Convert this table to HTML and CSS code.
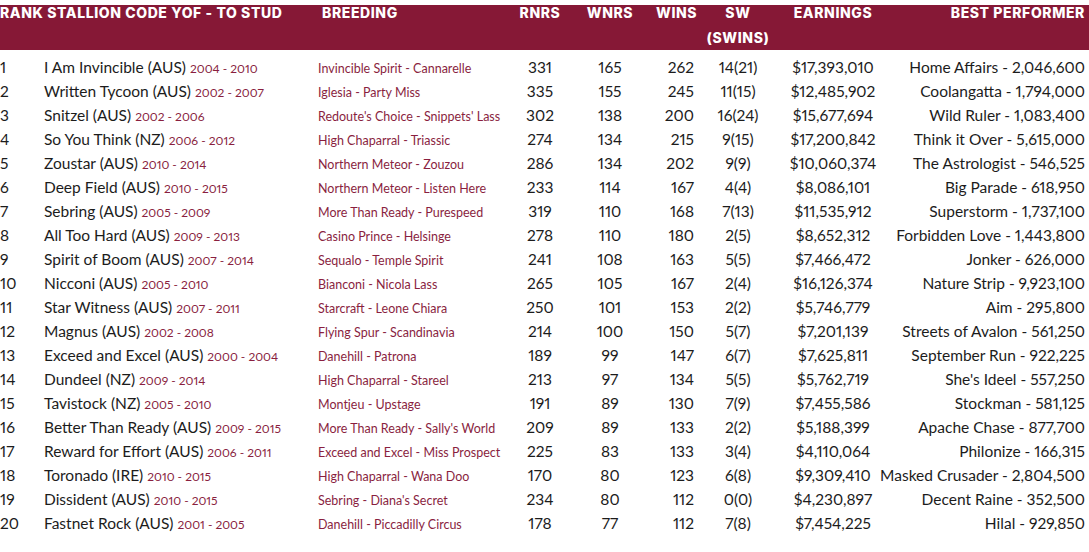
FILE: index.html
```html
<!DOCTYPE html>
<html lang="en">
<head>
<meta charset="utf-8">
<title>Stallion Rankings</title>
<link rel="stylesheet" href="styles.css">
</head>
<body>
<div class="sheet">
  <div class="head">
    <div class="h-rank">RANK STALLION CODE YOF - TO STUD</div>
    <div class="h-breed">BREEDING</div>
    <div class="h-num c-rnrs">RNRS</div>
    <div class="h-num c-wnrs">WNRS</div>
    <div class="h-num c-wins">WINS</div>
    <div class="h-num c-sw">SW<br>(SWINS)</div>
    <div class="h-num c-earn">EARNINGS</div>
    <div class="h-num c-best">BEST PERFORMER</div>
  </div>
  <div class="rows">
    <div class="row"><div class="rank">1</div><div class="name">I Am Invincible (AUS) <span class="yrs">2004 - 2010</span></div><div class="breed">Invincible Spirit - Cannarelle</div><div class="c-rnrs">331</div><div class="c-wnrs">165</div><div class="c-wins">262</div><div class="c-sw">14(21)</div><div class="c-earn">$17,393,010</div><div class="c-best">Home Affairs - 2,046,600</div></div>
    <div class="row"><div class="rank">2</div><div class="name">Written Tycoon (AUS) <span class="yrs">2002 - 2007</span></div><div class="breed">Iglesia - Party Miss</div><div class="c-rnrs">335</div><div class="c-wnrs">155</div><div class="c-wins">245</div><div class="c-sw">11(15)</div><div class="c-earn">$12,485,902</div><div class="c-best">Coolangatta - 1,794,000</div></div>
    <div class="row"><div class="rank">3</div><div class="name">Snitzel (AUS) <span class="yrs">2002 - 2006</span></div><div class="breed">Redoute's Choice - Snippets' Lass</div><div class="c-rnrs">302</div><div class="c-wnrs">138</div><div class="c-wins">200</div><div class="c-sw">16(24)</div><div class="c-earn">$15,677,694</div><div class="c-best">Wild Ruler - 1,083,400</div></div>
    <div class="row"><div class="rank">4</div><div class="name">So You Think (NZ) <span class="yrs">2006 - 2012</span></div><div class="breed">High Chaparral - Triassic</div><div class="c-rnrs">274</div><div class="c-wnrs">134</div><div class="c-wins">215</div><div class="c-sw">9(15)</div><div class="c-earn">$17,200,842</div><div class="c-best">Think it Over - 5,615,000</div></div>
    <div class="row"><div class="rank">5</div><div class="name">Zoustar (AUS) <span class="yrs">2010 - 2014</span></div><div class="breed">Northern Meteor - Zouzou</div><div class="c-rnrs">286</div><div class="c-wnrs">134</div><div class="c-wins">202</div><div class="c-sw">9(9)</div><div class="c-earn">$10,060,374</div><div class="c-best">The Astrologist - 546,525</div></div>
    <div class="row"><div class="rank">6</div><div class="name">Deep Field (AUS) <span class="yrs">2010 - 2015</span></div><div class="breed">Northern Meteor - Listen Here</div><div class="c-rnrs">233</div><div class="c-wnrs">114</div><div class="c-wins">167</div><div class="c-sw">4(4)</div><div class="c-earn">$8,086,101</div><div class="c-best">Big Parade - 618,950</div></div>
    <div class="row"><div class="rank">7</div><div class="name">Sebring (AUS) <span class="yrs">2005 - 2009</span></div><div class="breed">More Than Ready - Purespeed</div><div class="c-rnrs">319</div><div class="c-wnrs">110</div><div class="c-wins">168</div><div class="c-sw">7(13)</div><div class="c-earn">$11,535,912</div><div class="c-best">Superstorm - 1,737,100</div></div>
    <div class="row"><div class="rank">8</div><div class="name">All Too Hard (AUS) <span class="yrs">2009 - 2013</span></div><div class="breed">Casino Prince - Helsinge</div><div class="c-rnrs">278</div><div class="c-wnrs">110</div><div class="c-wins">180</div><div class="c-sw">2(5)</div><div class="c-earn">$8,652,312</div><div class="c-best">Forbidden Love - 1,443,800</div></div>
    <div class="row"><div class="rank">9</div><div class="name">Spirit of Boom (AUS) <span class="yrs">2007 - 2014</span></div><div class="breed">Sequalo - Temple Spirit</div><div class="c-rnrs">241</div><div class="c-wnrs">108</div><div class="c-wins">163</div><div class="c-sw">5(5)</div><div class="c-earn">$7,466,472</div><div class="c-best">Jonker - 626,000</div></div>
    <div class="row"><div class="rank">10</div><div class="name">Nicconi (AUS) <span class="yrs">2005 - 2010</span></div><div class="breed">Bianconi - Nicola Lass</div><div class="c-rnrs">265</div><div class="c-wnrs">105</div><div class="c-wins">167</div><div class="c-sw">2(4)</div><div class="c-earn">$16,126,374</div><div class="c-best">Nature Strip - 9,923,100</div></div>
    <div class="row"><div class="rank">11</div><div class="name">Star Witness (AUS) <span class="yrs">2007 - 2011</span></div><div class="breed">Starcraft - Leone Chiara</div><div class="c-rnrs">250</div><div class="c-wnrs">101</div><div class="c-wins">153</div><div class="c-sw">2(2)</div><div class="c-earn">$5,746,779</div><div class="c-best">Aim - 295,800</div></div>
    <div class="row"><div class="rank">12</div><div class="name">Magnus (AUS) <span class="yrs">2002 - 2008</span></div><div class="breed">Flying Spur - Scandinavia</div><div class="c-rnrs">214</div><div class="c-wnrs">100</div><div class="c-wins">150</div><div class="c-sw">5(7)</div><div class="c-earn">$7,201,139</div><div class="c-best">Streets of Avalon - 561,250</div></div>
    <div class="row"><div class="rank">13</div><div class="name">Exceed and Excel (AUS) <span class="yrs">2000 - 2004</span></div><div class="breed">Danehill - Patrona</div><div class="c-rnrs">189</div><div class="c-wnrs">99</div><div class="c-wins">147</div><div class="c-sw">6(7)</div><div class="c-earn">$7,625,811</div><div class="c-best">September Run - 922,225</div></div>
    <div class="row"><div class="rank">14</div><div class="name">Dundeel (NZ) <span class="yrs">2009 - 2014</span></div><div class="breed">High Chaparral - Stareel</div><div class="c-rnrs">213</div><div class="c-wnrs">97</div><div class="c-wins">134</div><div class="c-sw">5(5)</div><div class="c-earn">$5,762,719</div><div class="c-best">She's Ideel - 557,250</div></div>
    <div class="row"><div class="rank">15</div><div class="name">Tavistock (NZ) <span class="yrs">2005 - 2010</span></div><div class="breed">Montjeu - Upstage</div><div class="c-rnrs">191</div><div class="c-wnrs">89</div><div class="c-wins">130</div><div class="c-sw">7(9)</div><div class="c-earn">$7,455,586</div><div class="c-best">Stockman - 581,125</div></div>
    <div class="row"><div class="rank">16</div><div class="name">Better Than Ready (AUS) <span class="yrs">2009 - 2015</span></div><div class="breed">More Than Ready - Sally's World</div><div class="c-rnrs">209</div><div class="c-wnrs">89</div><div class="c-wins">133</div><div class="c-sw">2(2)</div><div class="c-earn">$5,188,399</div><div class="c-best">Apache Chase - 877,700</div></div>
    <div class="row"><div class="rank">17</div><div class="name">Reward for Effort (AUS) <span class="yrs">2006 - 2011</span></div><div class="breed">Exceed and Excel - Miss Prospect</div><div class="c-rnrs">225</div><div class="c-wnrs">83</div><div class="c-wins">133</div><div class="c-sw">3(4)</div><div class="c-earn">$4,110,064</div><div class="c-best">Philonize - 166,315</div></div>
    <div class="row"><div class="rank">18</div><div class="name">Toronado (IRE) <span class="yrs">2010 - 2015</span></div><div class="breed">High Chaparral - Wana Doo</div><div class="c-rnrs">170</div><div class="c-wnrs">80</div><div class="c-wins">123</div><div class="c-sw">6(8)</div><div class="c-earn">$9,309,410</div><div class="c-best">Masked Crusader - 2,804,500</div></div>
    <div class="row"><div class="rank">19</div><div class="name">Dissident (AUS) <span class="yrs">2010 - 2015</span></div><div class="breed">Sebring - Diana's Secret</div><div class="c-rnrs">234</div><div class="c-wnrs">80</div><div class="c-wins">112</div><div class="c-sw">0(0)</div><div class="c-earn">$4,230,897</div><div class="c-best">Decent Raine - 352,500</div></div>
    <div class="row"><div class="rank">20</div><div class="name">Fastnet Rock (AUS) <span class="yrs">2001 - 2005</span></div><div class="breed">Danehill - Piccadilly Circus</div><div class="c-rnrs">178</div><div class="c-wnrs">77</div><div class="c-wins">112</div><div class="c-sw">7(8)</div><div class="c-earn">$7,454,225</div><div class="c-best">Hilal - 929,850</div></div>
  </div>
</div>
</body>
</html>
```

FILE: styles.css
```css
html, body {
  margin: 0;
  padding: 0;
  background: #ffffff;
}

body {
  font-family: "Lato", "Open Sans", sans-serif;
  color: #1c1c1c;
  width: 1089px;
  height: 552px;
  overflow: hidden;
  font-variant-numeric: proportional-nums;
}

.sheet {
  width: 1089px;
}

.head,
.row {
  display: grid;
  grid-template-columns: 44px 274px 198px 48px 92px 40px 84px 106px 203px;
}

.head {
  height: 50px;
  align-items: start;
  background: linear-gradient(#ffffff 0, #ffffff 5px, #861836 5px, #861836 100%);
  color: #ffffff;
  font-family: "Inter", "Lato", sans-serif;
  font-weight: 800;
  font-size: 14px;
  line-height: 25px;
  letter-spacing: 0.6px;
  white-space: nowrap;
}

.h-rank {
  grid-column: 1 / 3;
}

.h-breed {
  padding-left: 4px;
}

.rows {
  padding-top: 5px;
}

.row {
  height: 24px;
  align-items: baseline;
  line-height: 24px;
  font-size: 15.5px;
  white-space: nowrap;
}

.yrs {
  font-size: 12px;
  color: #8a1f3f;
}

.breed {
  font-size: 12.5px;
  color: #8a1f3f;
}

.c-rnrs,
.c-wnrs,
.c-sw,
.c-earn {
  text-align: center;
}

.c-wins {
  text-align: right;
  padding-right: 2px;
}

.c-best {
  display: flex;
  justify-content: flex-end;
  padding-right: 4px;
}
```
